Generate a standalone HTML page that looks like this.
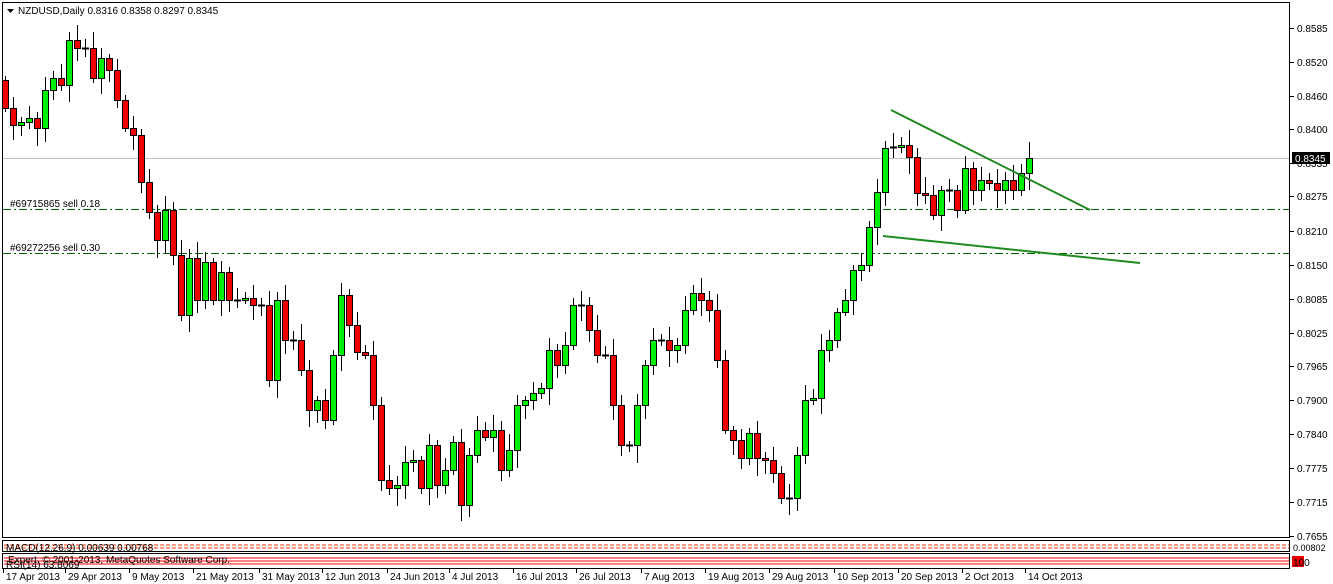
<!DOCTYPE html>
<html><head><meta charset="utf-8"><style>
body{margin:0;background:#fff;width:1333px;height:584px;overflow:hidden;font-family:"Liberation Sans",sans-serif}
svg{position:absolute;left:0;top:0}
text{font-family:"Liberation Sans",sans-serif;font-size:10px;fill:#000}
</style></head><body>
<svg id="s" width="1333" height="584" xmlns="http://www.w3.org/2000/svg">
<rect x="0" y="0" width="1333" height="584" fill="#fff"/>
<rect x="2.5" y="2.5" width="1287" height="535" fill="none" stroke="#000"/>
<rect x="2.5" y="540.5" width="1287" height="11" fill="none" stroke="#000"/>
<rect x="2.5" y="553.5" width="1287" height="15" fill="none" stroke="#000"/>
<line x1="3" y1="158.5" x2="1289" y2="158.5" stroke="#c0c0c0"/>
<line x1="3" y1="209.5" x2="1289" y2="209.5" stroke="#006400" stroke-dasharray="8,3,2,3"/>
<line x1="3" y1="253.5" x2="1289" y2="253.5" stroke="#006400" stroke-dasharray="8,3,2,3"/>
<text x="10" y="207">#69715865 sell 0.18</text>
<text x="10" y="251">#69272256 sell 0.30</text>
<g id="c"></g>
<line x1="891" y1="110" x2="1090" y2="210" stroke="#1f8a1f" stroke-width="2"/>
<line x1="883" y1="236" x2="1140" y2="263" stroke="#1f8a1f" stroke-width="2"/>
<path d="M7 9h7l-3.5 4z" fill="#000"/>
<text x="18" y="14">NZDUSD,Daily  0.8316 0.8358 0.8297 0.8345</text>
<g id="ax"></g>
<rect x="1292" y="152" width="38" height="12" fill="#000"/>
<text x="1295" y="162" fill="#fff" style="fill:#fff">0.8345</text>
<line x1="4" y1="545" x2="1289" y2="545" stroke="#ff3300" stroke-dasharray="4,2"/>
<line x1="4" y1="548" x2="1289" y2="548" stroke="#ff3300" stroke-dasharray="4,2"/>
<text x="6" y="551" style="font-size:10px">MACD(12,26,9) 0.00639 0.00768</text>
<line x1="4" y1="558" x2="1289" y2="558" stroke="#ff0000"/>
<line x1="4" y1="561" x2="1289" y2="561" stroke="#ff0000"/>
<line x1="4" y1="564" x2="1289" y2="564" stroke="#ff0000"/>
<text x="8" y="563">Expert, © 2001-2013, MetaQuotes Software Corp.</text>
<text x="6" y="568">RSI(14) 63.8069</text>
<rect x="1292" y="556" width="12" height="11" fill="#e00"/>
<text x="1293" y="566">100</text>
<text x="1293" y="551" style="font-size:9px">0.00802</text>
<g id="dt"></g>
</svg>
<script>
var ns="http://www.w3.org/2000/svg";
function el(p,t,a,tx){var e=document.createElementNS(ns,t);for(var k in a)e.setAttribute(k,a[k]);if(tx)e.textContent=tx;document.getElementById(p).appendChild(e);}
var cl=[108,125,122,118,128,90,78,85,40,48,48,78,58,70,100,128,135,182,212,240,210,255,315,258,300,262,300,272,300,300,298,305,305,380,300,340,340,370,410,400,420,355,295,325,352,355,405,480,488,485,462,460,488,445,485,470,442,505,455,430,437,430,470,450,405,400,393,388,350,365,345,305,305,330,355,355,405,445,445,405,365,340,340,350,345,310,293,300,310,360,430,440,458,433,458,460,473,498,498,455,400,398,350,340,312,300,270,265,227,192,148,147,145,157,193,195,215,190,190,210,168,190,180,183,190,180,190,173,158];
var prev=80;
for(var i=0;i<cl.length;i++){var x=5+i*8,o=prev,c=cl[i];var t=Math.min(o,c),b=Math.max(o,c);
var h=t-4-((i*7)%13),l=b+4+((i*11)%15);
el("c","line",{x1:x+0.5,y1:h,x2:x+0.5,y2:l,stroke:"#000"});
if(b-t<2){el("c","line",{x1:x-3,y1:t+0.5,x2:x+4,y2:t+0.5,stroke:"#000","stroke-width":2});}
else el("c","rect",{x:x-2.5,y:t+0.5,width:6,height:b-t,fill:c<o?"#00f000":"#f00000",stroke:"#000"});
prev=c;}
var lb=[["0.8585",28],["0.8520",62],["0.8460",96],["0.8400",129],["0.8335",163],["0.8275",196],["0.8210",231],["0.8150",265],["0.8085",299],["0.8025",333],["0.7965",366],["0.7900",400],["0.7840",434],["0.7775",468],["0.7715",502],["0.7655",536]];
lb.forEach(function(a){el("ax","line",{x1:1290,y1:a[1]+0.5,x2:1294,y2:a[1]+0.5,stroke:"#000"});el("ax","text",{x:1297,y:a[1]+4},a[0]);});
var d=["17 Apr 2013","29 Apr 2013","9 May 2013","21 May 2013","31 May 2013","12 Jun 2013","24 Jun 2013","4 Jul 2013","16 Jul 2013","26 Jul 2013","7 Aug 2013","19 Aug 2013","29 Aug 2013","10 Sep 2013","20 Sep 2013","2 Oct 2013","14 Oct 2013"];
var dx=[3,65,129,193,259,322,387,449,513,576,641,705,769,834,898,962,1025];
d.forEach(function(s,i){el("dt","line",{x1:dx[i]+0.5,y1:569,x2:dx[i]+0.5,y2:573,stroke:"#000"});el("dt","text",{x:dx[i]+3,y:580},s);});
</script>
</body></html>
